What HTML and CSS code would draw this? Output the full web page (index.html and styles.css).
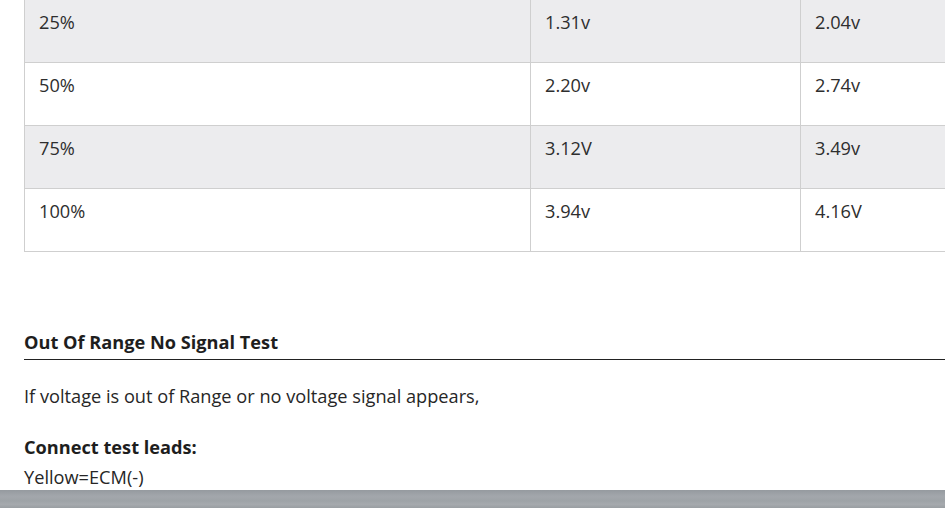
FILE: index.html
```html
<!DOCTYPE html>
<html>
<head>
<meta charset="utf-8">
<link rel="stylesheet" href="styles.css">
</head>
<body>
<main class="content">
  <table class="volt-table">
    <tbody>
      <tr class="row-alt"><td>25%</td><td>1.31v</td><td>2.04v</td></tr>
      <tr><td>50%</td><td>2.20v</td><td>2.74v</td></tr>
      <tr class="row-alt"><td>75%</td><td>3.12V</td><td>3.49v</td></tr>
      <tr><td>100%</td><td>3.94v</td><td>4.16V</td></tr>
    </tbody>
  </table>
  <h3 class="section-title">Out Of Range No Signal Test</h3>
  <p class="text">If voltage is out of Range or no voltage signal appears,</p>
  <p class="leads"><strong>Connect test leads:</strong><br>Yellow=ECM(-)</p>
</main>
<div class="bottom-band"></div>
</body>
</html>
```
FILE: styles.css
```css
html, body {
  margin: 0;
  padding: 0;
  background: #fff;
  overflow: hidden;
}
body {
  font-family: "Open Sans", "Noto Sans", sans-serif;
  color: #262626;
  font-size: 18.2px;
}
.content {
  padding-left: 24px;
  width: 1100px;
}
.volt-table {
  border-collapse: collapse;
  margin-top: -1px;
  width: 1046px;
  table-layout: fixed;
}
.volt-table td {
  border: 1px solid #cfcfcf;
  padding: 10px 14px 28px;
  line-height: 24px;
  vertical-align: top;
  font-size: 18.2px;
  color: #2e2e2e;
}
.volt-table td:nth-child(1) { width: 477px; }
.volt-table td:nth-child(2) { width: 241px; }
.volt-table tr.row-alt td { background: #ececee; }
.section-title {
  margin: 78px 0 0;
  font-size: 18.2px;
  font-weight: 700;
  line-height: 24px;
  padding-bottom: 5px;
  border-bottom: 1px solid #222;
  color: #1e1e1e;
}
.text {
  margin: 24px 0 0;
  line-height: 24px;
}
.leads {
  margin: 24px 0 0;
  line-height: 30px;
}
.leads strong { color: #1e1e1e; }
.bottom-band {
  position: fixed;
  left: 0;
  right: 0;
  bottom: 0;
  height: 18px;
  background: linear-gradient(180deg, #959a9f 0%, #a3a7ac 35%, #9ea3a7 60%, #a6aaae 80%, #999ea2 100%);
}
```
